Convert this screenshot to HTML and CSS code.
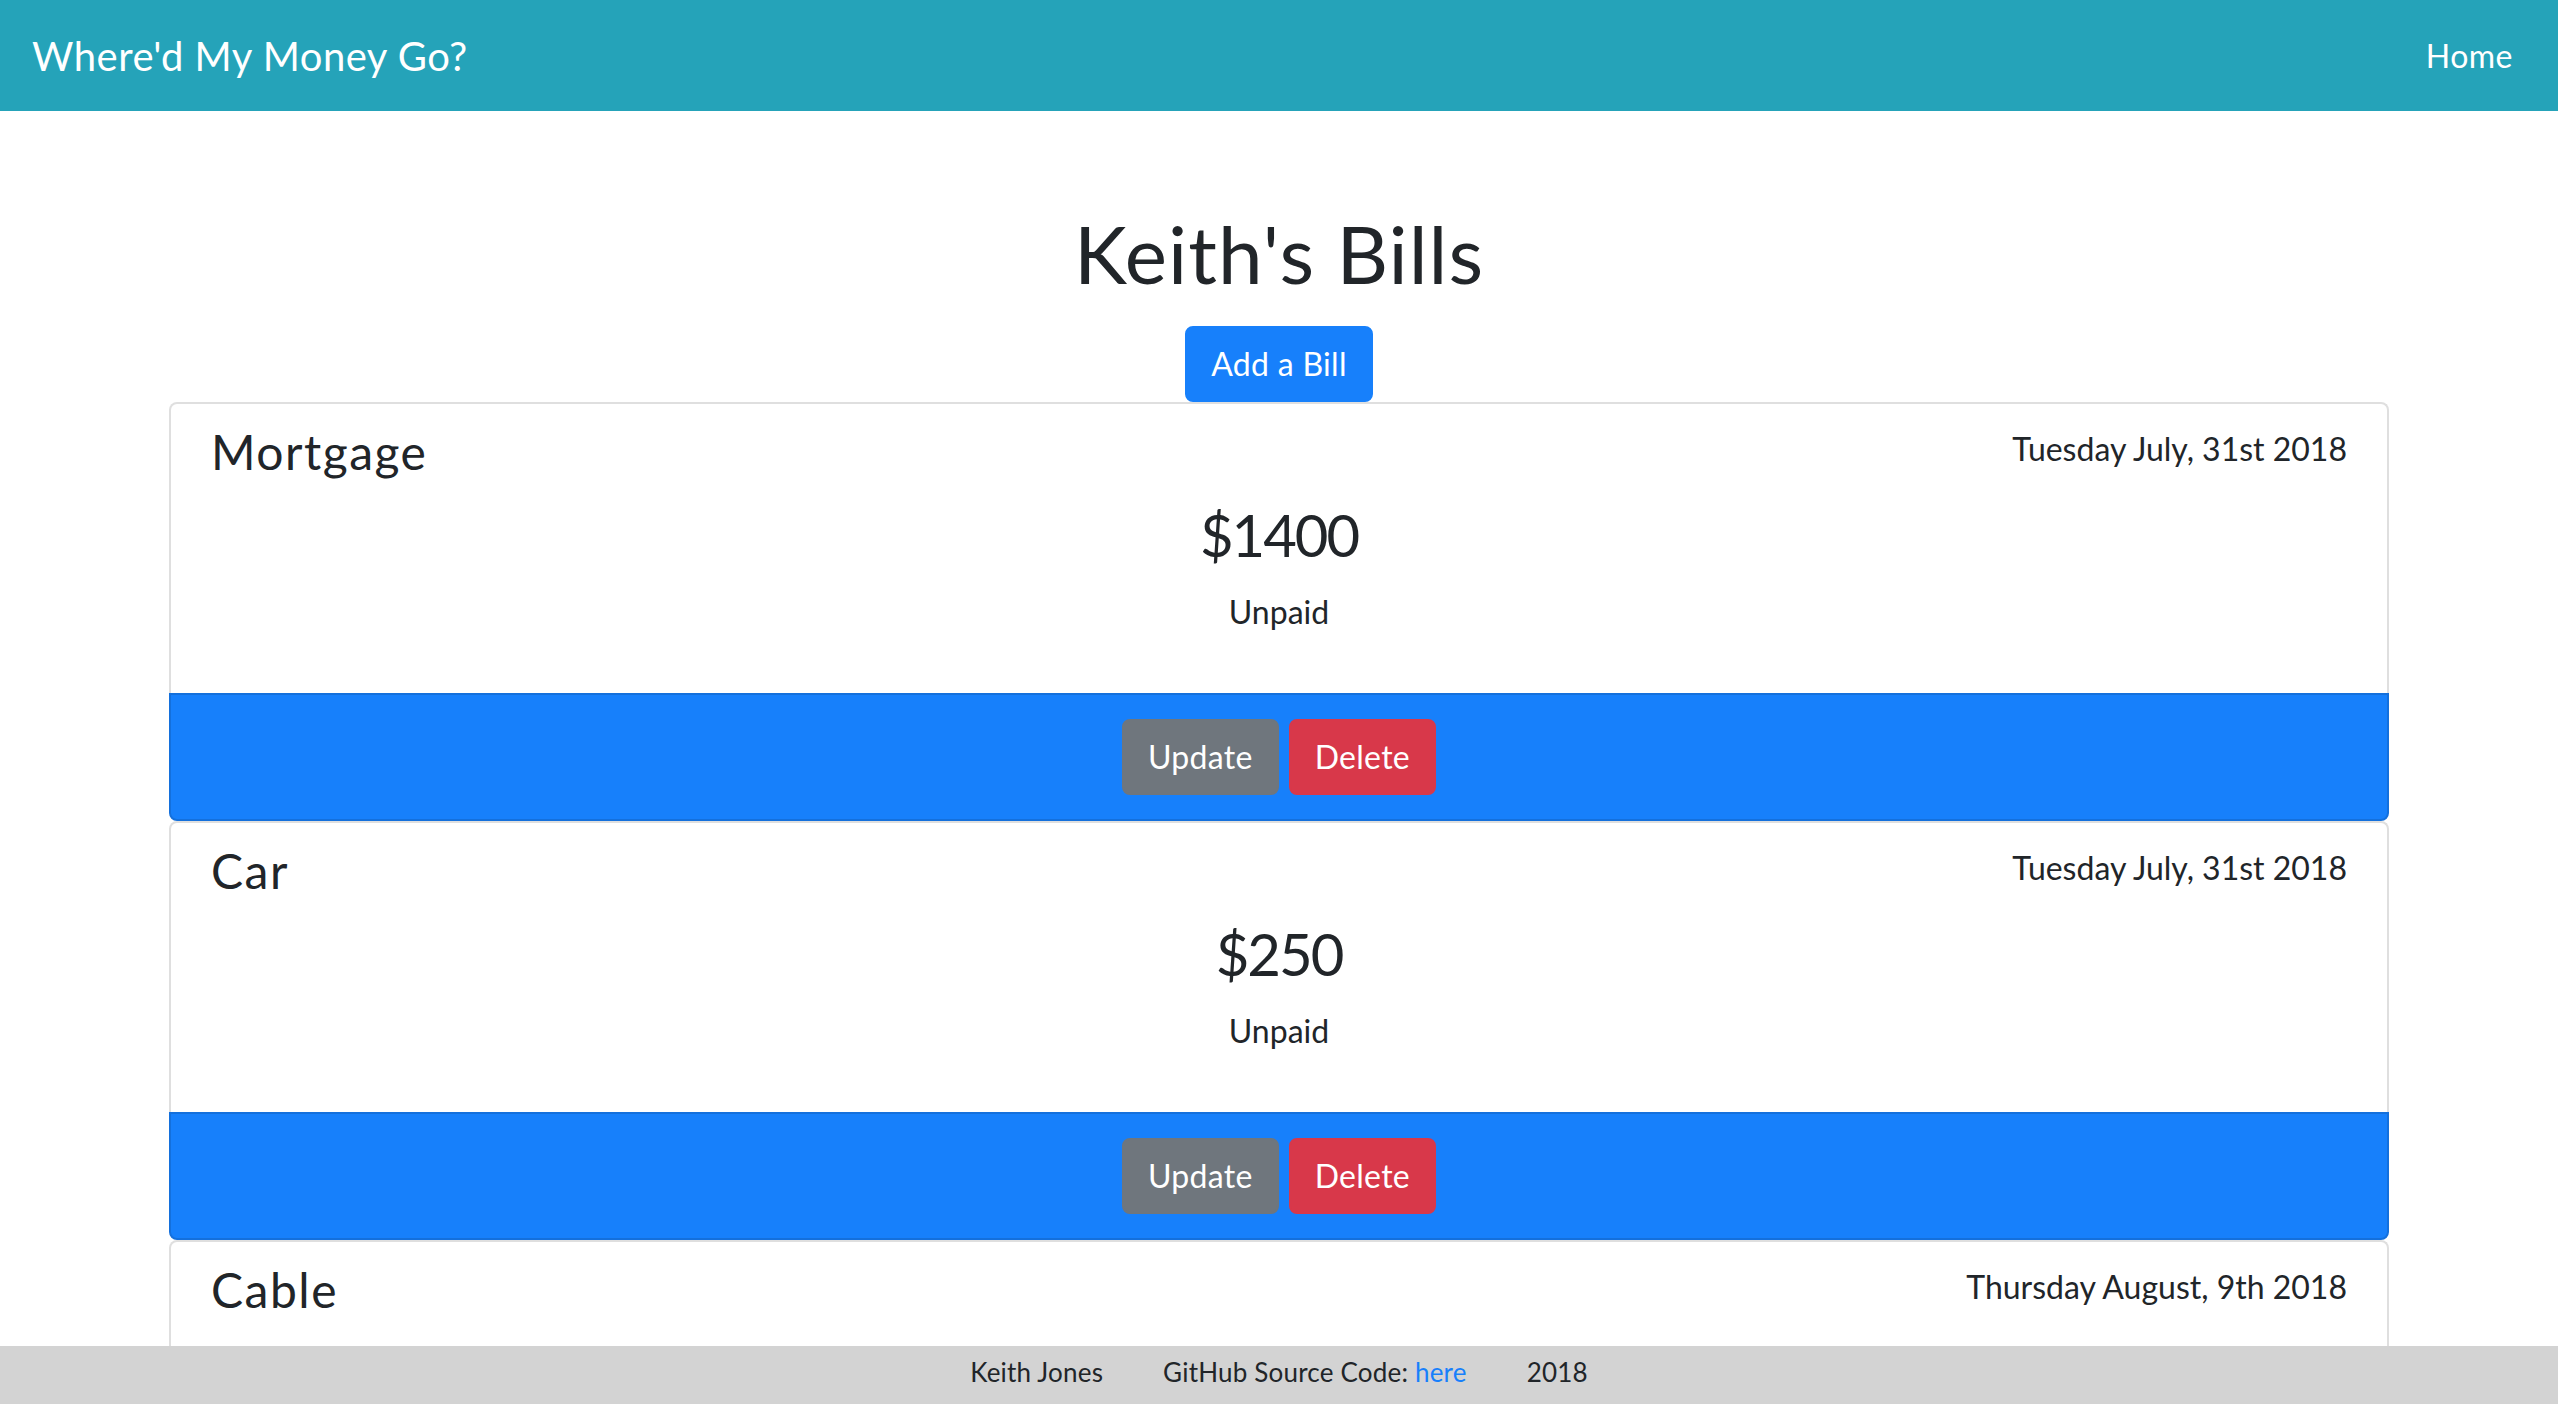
FILE: index.html
```html
<!DOCTYPE html>
<html lang="en">
<head>
<meta charset="utf-8">
<title>Where'd My Money Go?</title>
<link rel="stylesheet" href="styles.css">
</head>
<body>
<nav class="navbar">
  <a class="brand" href="#">Where'd My Money Go?</a>
  <a class="nav-link" href="#">Home</a>
</nav>

<main class="container">
  <h1 class="page-title">Keith's Bills</h1>
  <div class="add-row">
    <button class="btn btn-primary">Add a Bill</button>
  </div>

  <section class="bill">
    <div class="bill-body">
      <div class="bill-head">
        <h4 class="bill-name">Mortgage</h4>
        <span class="bill-date">Tuesday July, 31st 2018</span>
      </div>
      <h2 class="bill-amount">$1400</h2>
      <p class="bill-status">Unpaid</p>
    </div>
    <div class="bill-footer">
      <button class="btn btn-secondary">Update</button>
      <button class="btn btn-danger">Delete</button>
    </div>
  </section>

  <section class="bill">
    <div class="bill-body">
      <div class="bill-head">
        <h4 class="bill-name">Car</h4>
        <span class="bill-date">Tuesday July, 31st 2018</span>
      </div>
      <h2 class="bill-amount">$250</h2>
      <p class="bill-status">Unpaid</p>
    </div>
    <div class="bill-footer">
      <button class="btn btn-secondary">Update</button>
      <button class="btn btn-danger">Delete</button>
    </div>
  </section>

  <section class="bill">
    <div class="bill-body bill-body-last">
      <div class="bill-head">
        <h4 class="bill-name">Cable</h4>
        <span class="bill-date">Thursday August, 9th 2018</span>
      </div>
    </div>
  </section>
</main>

<footer class="site-footer">
  <span class="footer-item">Keith Jones</span>
  <span class="footer-item">GitHub Source Code: <a href="#" class="footer-link">here</a></span>
  <span class="footer-item">2018</span>
</footer>
</body>
</html>
```

FILE: styles.css
```css
html, body {
  margin: 0;
  padding: 0;
  height: 100%;
  overflow: hidden;
}

body {
  font-family: "Lato", "Noto Sans", "Liberation Sans", sans-serif;
  font-size: 32px;
  line-height: 1.5;
  color: #212529;
  background: #ffffff;
}

* {
  box-sizing: border-box;
}

/* Navbar */
.navbar {
  height: 111px;
  background: #25a3b9;
  display: flex;
  align-items: center;
  justify-content: space-between;
  padding: 0 32px;
}

.brand {
  color: #ffffff;
  text-decoration: none;
  font-size: 40px;
  line-height: 1.5;
  letter-spacing: 0.5px;
}

.nav-link {
  color: #ffffff;
  text-decoration: none;
  font-size: 32px;
  padding: 0 13px 0 16px;
  letter-spacing: 0.5px;
}

/* Main */
.container {
  max-width: 2280px;
  margin: 0 auto;
  padding: 0 30px;
}

.page-title {
  margin: 94px 0 25px;
  font-size: 80px;
  font-weight: 400;
  line-height: 1.2;
  text-align: center;
  letter-spacing: 1px;
}

.add-row {
  display: flex;
  justify-content: center;
}

.btn {
  font-family: inherit;
  font-size: 32px;
  line-height: 1.5;
  padding: 12px 24px;
  border: 2px solid transparent;
  border-radius: 8px;
  color: #ffffff;
  cursor: pointer;
  letter-spacing: 0.3px;
}

.btn-primary {
  background: #1780fb;
  border-color: #1780fb;
}

.btn-secondary {
  background: #6f767d;
  border-color: #6f767d;
}

.btn-danger {
  background: #d8384a;
  border-color: #d8384a;
}

/* Bill cards */
.bill {
  display: flex;
  flex-direction: column;
}

.bill-body {
  border: 2px solid #dfdfdf;
  border-bottom: none;
  border-radius: 8px 8px 0 0;
  padding: 19px 40px 57px;
  background: #ffffff;
}

.bill-body-last {
  height: 300px;
}

.bill-head {
  display: flex;
  justify-content: space-between;
  align-items: flex-start;
}

.bill-name {
  margin: 0;
  font-size: 48px;
  font-weight: 400;
  line-height: 1.2;
  letter-spacing: 1.5px;
}

.bill-date {
  margin-top: 2px;
  font-size: 32px;
  line-height: 1.5;
}

.bill-amount {
  margin: 19px 0 19px;
  font-size: 58px;
  font-weight: 400;
  line-height: 1.2;
  text-align: center;
  letter-spacing: -2px;
}

.bill-status {
  margin: 0;
  text-align: center;
}

.bill-footer {
  background: #1780fb;
  border: 2px solid #1470dc;
  border-radius: 0 0 8px 8px;
  padding: 24px 40px;
  display: flex;
  justify-content: center;
  gap: 10px;
}

/* Footer */
.site-footer {
  position: fixed;
  left: 0;
  right: 0;
  bottom: 0;
  height: 58px;
  background: #d3d3d3;
  display: flex;
  justify-content: center;
  align-items: center;
  gap: 60px;
  padding-bottom: 6px;
  font-size: 26px;
  letter-spacing: 0.2px;
}

.footer-link {
  color: #1780fb;
  text-decoration: none;
}
```
